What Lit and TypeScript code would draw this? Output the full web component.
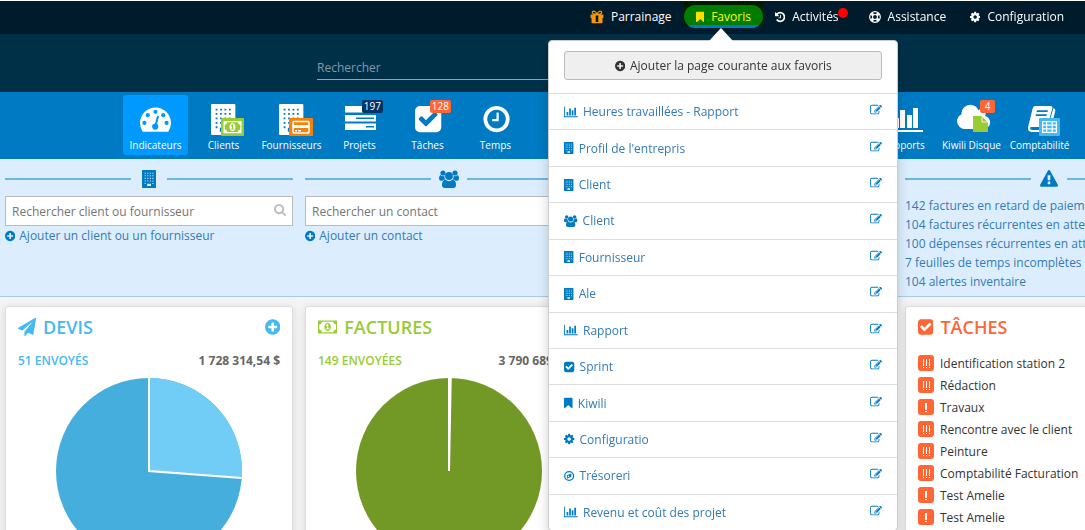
import { LitElement, html, css, svg, TemplateResult, SVGTemplateResult } from 'lit';
import { customElement, property } from 'lit/decorators.js';

interface Glyph {
  box: string;
  body: SVGTemplateResult;
}

const one = (box: string, d: string): Glyph => ({ box, body: svg`<path d=${d}></path>` });

const DISC =
  'm0 0q0 209-103 385.5t-279.5 279.5-385.5 103-385.5-103-279.5-279.5-103-385.5 103-385.5 279.5-279.5 385.5-103 385.5 103 279.5 279.5 103 385.5z';

const D = {
  check:
    'M813 1299l614-614q19-19 19-45t-19-45l-102-102q-19-19-45-19t-45 19l-467 467-211-211q-19-19-45-19t-45 19l-102 102q-19 19-19 45t19 45l358 358q19 19 45 19t45-19zm851-883v960q0 119-84.5 203.5t-203.5 84.5h-960q-119 0-203.5-84.5t-84.5-203.5v-960q0-119 84.5-203.5t203.5-84.5h960q119 0 203.5 84.5t84.5 203.5z',
  clock:
    'M1024 544v448q0 14-9 23t-23 9h-320q-14 0-23-9t-9-23v-64q0-14 9-23t23-9h224v-352q0-14 9-23t23-9h64q14 0 23 9t9 23zm416 352q0-148-73-273t-198-198-273-73-273 73-198 198-73 273 73 273 198 198 273 73 273-73 198-198 73-273zm224 0' +
    DISC.slice(4),
  money:
    'M768 1152h384v-96h-128v-448h-114l-148 137 77 80q42-37 55-57h2v288h-128v96zm512-256q0 70-21 142t-59.5 134-101.5 101-138 39-138-39-101.5-101-59.5-134-21-142 21-142 59.5-134 101.5-101 138-39 138 39 101.5 101 59.5 134 21 142zm512 256v-512q-106 0-181-75t-75-181h-1152q0 106-75 181t-181 75v512q106 0 181 75t75 181h1152q0-106 75-181t181-75zm128-832v1152q0 26-19 45t-45 19h-1792q-26 0-45-19t-19-45v-1152q0-26 19-45t45-19h1792q26 0 45 19t19 45z',
  cloud:
    'M1984 1152q0 159-112.5 271.5t-271.5 112.5h-1088q-185 0-316.5-131.5t-131.5-316.5q0-132 71-241.5t187-163.5q-2-28-2-43 0-212 150-362t362-150q158 0 286.5 88t187.5 230q70-62 166-62 106 0 181 75t75 181q0 75-41 138 129 30 213 134.5t84 239.5z',
  gauge:
    'M1792 1152q0 261-141 483-19 29-54 29h-1402q-35 0-54-29-141-221-141-483 0-182 71-348t191-286 286-191 348-71 348 71 286 191 191 286 71 348z',
};

/* Office block: outer wall with a grid of windows and a door cut out of it. */
const blockPath = (() => {
  let d = 'M64 0h1280q64 0 64 64v1664q0 64-64 64h-1280q-64 0-64-64v-1664q0-64 64-64z';
  for (let r = 0; r < 5; r++) {
    for (let c = 0; c < 4; c++) {
      if (r === 4 && (c === 1 || c === 2)) continue;
      d += `M${268 + c * 256} ${268 + r * 256}v104h104v-104z`;
    }
  }
  return d + 'M512 1376v224h384v-224z';
})();

const GLYPHS: Record<string, Glyph> = {
  building: one('0 0 1408 1792', blockPath),
  plus: one(
    '128 0 1536 1792',
    'M1344 960v-128q0-26-19-45t-45-19h-256v-256q0-26-19-45t-45-19h-128q-26 0-45 19t-19 45v256h-256q-26 0-45 19t-19 45v128q0 26 19 45t45 19h256v256q0 26 19 45t45 19h128q26 0 45-19t19-45v-256h256q26 0 45-19t19-45zm320-64' +
      DISC.slice(4)
  ),
  chart: one(
    '0 0 2048 1792',
    'M640 896v512h-256v-512h256zm384-512v1024h-256v-1024h256zm1024 1152v128h-2048v-1536h128v1408h1920zm-640-896v768h-256v-768h256zm384-384v1152h-256v-1152h256z'
  ),
  check: one('128 0 1536 1792', D.check),
  bookmark: one(
    '256 0 1280 1792',
    'M1420 128q23 0 44 9 33 13 52.5 41t19.5 62v1289q0 34-19.5 62t-52.5 41q-19 8-44 8-48 0-83-32l-441-424-441 424q-36 33-83 33-23 0-44-9-33-13-52.5-41t-19.5-62v-1289q0-34 19.5-62t52.5-41q21-9 44-9h1048z'
  ),
  cog: one(
    '128 0 1536 1792',
    'M1152 896q0-106-75-181t-181-75-181 75-75 181 75 181 181 75 181-75 75-181zm512-109v222q0 12-8 23t-20 13l-185 28q-19 54-39 91 35 50 107 138 10 12 10 25t-9 23q-27 37-99 108t-94 71q-12 0-26-9l-138-108q-44 23-91 38-16 136-29 186-7 28-36 28h-222q-14 0-24.5-8.5t-11.5-21.5l-28-184q-49-16-90-37l-141 107q-10 9-25 9-14 0-25-11-126-114-165-168-7-10-7-23 0-12 8-23 15-21 51-66.5t54-70.5q-27-50-41-99l-183-27q-13-2-21-12.5t-8-23.5v-222q0-12 8-23t19-13l186-28q14-46 39-92-40-57-107-138-10-12-10-24 0-10 9-23 26-36 98.5-107.5t94.5-71.5q13 0 26 10l138 107q44-23 91-38 16-136 29-186 7-28 36-28h222q14 0 24.5 8.5t11.5 21.5l28 184q49 16 90 37l142-107q9-9 24-9 13 0 25 10 129 119 165 170 7 8 7 22 0 12-8 23-15 21-51 66.5t-54 70.5q26 50 41 98l183 28q13 2 21 12.5t8 23.5z'
  ),
  search: one(
    '64 128 1664 1664',
    'M1216 832q0-185-131.5-316.5t-316.5-131.5-316.5 131.5-131.5 316.5 131.5 316.5 316.5 131.5 316.5-131.5 131.5-316.5zm512 832q0 52-38 90t-90 38q-54 0-90-38l-343-342q-179 124-399 124-143 0-273.5-55.5t-225-150-150-225-55.5-273.5 55.5-273.5 150-225 225-150 273.5-55.5 273.5 55.5 225 150 150 225 55.5 273.5q0 220-124 399l343 343q37 37 37 90z'
  ),
  edit: one(
    '0 0 1792 1792',
    'M888 1184l116-116-152-152-116 116v56h96v96h56zm440-720q-16-16-33 1l-350 350q-17 17-1 33t33-1l350-350q17-17 1-33zm80 594v190q0 119-84.5 203.5t-203.5 84.5h-832q-119 0-203.5-84.5t-84.5-203.5v-832q0-119 84.5-203.5t203.5-84.5h832q63 0 117 25 15 7 18 23 3 17-9 29l-49 49q-14 14-32 8-23-6-45-6h-832q-66 0-113 47t-47 113v832q0 66 47 113t113 47h832q66 0 113-47t47-113v-126q0-13 9-22l64-64q15-15 35-7t20 29zm-96-738l288 288-672 672h-288v-288zm444 132l-92 92-288-288 92-92q28-28 68-28t68 28l152 152q28 28 28 68t-28 68z'
  ),
  warning: one(
    '0 0 1792 1792',
    'M1024 1375v-190q0-14-9.5-23.5t-22.5-9.5h-192q-13 0-22.5 9.5t-9.5 23.5v190q0 14 9.5 23.5t22.5 9.5h192q13 0 22.5-9.5t9.5-23.5zm-2-374l18-459q0-12-10-19-13-11-24-11h-220q-11 0-24 11-10 7-10 21l17 457q0 10 10 16.5t24 6.5h185q14 0 23.5-6.5t10.5-16.5zm-14-934l768 1408q35 63-2 126-17 29-46.5 46t-63.5 17h-1536q-34 0-63.5-17t-46.5-46q-37-63-2-126l768-1408q17-31 47-49t65-18 65 18 47 49z'
  ),
  plane: one(
    '0 0 1792 1792',
    'M1764 11q33 24 27 64l-256 1536q-5 29-32 45-14 8-31 8-11 0-24-5l-453-185-242 295q-18 23-49 23-13 0-22-4-19-7-30.5-23.5t-11.5-36.5v-349l864-1059-1069 925-395-162q-37-14-40-55-2-40 32-59l1664-960q15-9 32-9 20 0 36 11z'
  ),
  money: one('0 0 1920 1792', D.money),
  history: one(
    '128 0 1536 1792',
    'M1664 896q0 156-61 298t-164 245-245 164-298 61q-172 0-327-72.5t-264-204.5q-7-10-6.5-22.5t8.5-20.5l137-138q10-9 25-9 16 2 23 12 73 95 179 147t225 52q104 0 198.5-40.5t163.5-109.5 109.5-163.5 40.5-198.5-40.5-198.5-109.5-163.5-163.5-109.5-198.5-40.5q-98 0-188 35.5t-160 101.5l137 138q31 30 14 69-17 40-59 40h-448q-26 0-45-19t-19-45v-448q0-42 40-59 39-17 69 14l130 129q107-101 244.5-156.5t284.5-55.5q156 0 298 61t245 164 164 245 61 298zm-640-288v448q0 14-9 23t-23 9h-320q-14 0-23-9t-9-23v-64q0-14 9-23t23-9h224v-352q0-14 9-23t23-9h64q14 0 23 9t9 23z'
  ),
  gift: {
    box: '0 0 14 14',
    body: svg`<path fill-rule="evenodd" d="M.6 4.6h3.3C2.4 4.4 1.7 3.600 1.700 2.600C1.700 1.400 2.600.6 3.700.6C5 .6 6 1.500 7 3C8 1.500 9 .6 10.300.6C11.400.6 12.300 1.400 12.300 2.600C12.300 3.600 11.600 4.400 10.100 4.600H13.400V8H12.500V12.500Q12.500 13.300 11.700 13.300H2.300Q1.500 13.300 1.500 12.500V8H.6ZM3.700 1.800C3.200 1.800 2.900 2.100 2.900 2.600C2.900 3.200 3.400 3.500 4 3.500H6C5.400 2.600 4.600 1.800 3.700 1.800ZM10.300 1.800C9.400 1.800 8.600 2.600 8 3.500H10C10.600 3.500 11.100 3.200 11.100 2.600C11.100 2.100 10.800 1.800 10.300 1.800ZM5.700 5.500V12H8.300V5.500Z"></path>`,
  },
  ring: {
    box: '0 0 14 14',
    body: svg`<circle cx="7" cy="7" r="6.200" fill="none" stroke="currentColor" stroke-width="1.400"></circle>
      <circle cx="7" cy="7" r="2.900" fill="none" stroke="currentColor" stroke-width="1.200"></circle>
      <g fill="none" stroke="currentColor" stroke-width="3.400"><path d="M2.700 2.700l2.200 2.200M11.300 2.700l-2.200 2.200M2.700 11.300l2.200-2.200M11.300 11.300l-2.200-2.200"></path></g>`,
  },
  users: {
    box: '0 0 20 18',
    body: svg`<circle cx="4" cy="3" r="2.600"></circle><circle cx="16" cy="3" r="2.600"></circle><circle cx="10" cy="6" r="3.900"></circle>
      <path d="M1.200 5Q3.800 7 5.300 5.800Q5.200 8 6.400 9.600Q4.500 9.600 3.500 10.800H2Q0 10.700 0 8.500Q0 6 1.200 5ZM18.800 5Q16.200 7 14.700 5.800Q14.800 8 13.600 9.600Q15.500 9.600 16.500 10.800H18Q20 10.700 20 8.500Q20 6 18.800 5ZM6.400 9.800Q10 12.600 13.600 9.800Q17 10.200 17 15Q17 18 14.200 18H5.800Q3 18 3 15Q3 10.200 6.400 9.800Z"></path>`,
  },
  compass: {
    box: '0 0 12 14',
    body: svg`<circle cx="6" cy="7" r="5.200" fill="none" stroke="currentColor" stroke-width="1.500"></circle>
      <path fill-rule="evenodd" d="M8.600 4V8L3.400 10.200V6.200ZM4.400 8.800L6 8V6.400L4.400 7.100Z"></path>`,
  },
  /* Navigation pictograms share a 45 by 38 box. */
  navGauge: {
    box: '0 0 45 38',
    body: svg`<g transform="translate(7 3) scale(.0173)"><path d=${D.gauge}></path>
      <g fill="#09f"><circle cx="256" cy="1152" r="120"></circle><circle cx="448" cy="704" r="120"></circle><circle cx="896" cy="512" r="120"></circle><circle cx="1344" cy="704" r="120"></circle><circle cx="1536" cy="1152" r="120"></circle>
      <circle cx="880" cy="1360" r="180"></circle><path d="M1100 780L935 1400L820 1360L985 750Q1060 700 1100 780Z"></path></g></g>`,
  },
  navClients: {
    box: '0 0 45 38',
    body: svg`<path transform="translate(10 4) scale(.0173)" d=${blockPath}></path>
      <rect x="20" y="18" width="23" height="18" rx="1" fill="#9c3"></rect>
      <path transform="translate(22.500 18.700) scale(.0094)" d=${D.money}></path>`,
  },
  navSuppliers: {
    box: '0 0 45 38',
    body: svg`<path transform="translate(10 4) scale(.0173)" d=${blockPath}></path>
      <rect x="20" y="18" width="24" height="18" rx="1" fill="#f7820b"></rect>
      <rect x="24" y="21.500" width="16" height="11.500" rx="1" fill="none" stroke="#fff" stroke-width="1.500"></rect>
      <path d="M24 25h16v3H24zM26 30h2v1.500h-2zM29 30h3v1.500h-3z"></path>`,
  },
  navProjects: {
    box: '0 0 45 38',
    body: svg`<path fill-rule="evenodd" d="M8 6h31v6.500H8zM8 15h31v6.500H8zM8 23.500h31V30H8zM19 17.500v1.500h18v-1.500zM29 26v1.500h8V26z"></path>`,
  },
  navTasks: {
    box: '0 0 45 38',
    body: svg`<path transform="translate(7.800 3.800) scale(.0171)" d=${D.check}></path>`,
  },
  navTime: {
    box: '0 0 45 38',
    body: svg`<path transform="translate(8.200 3.800) scale(.0171)" d=${D.clock}></path>`,
  },
  navReports: {
    box: '0 0 45 38',
    body: svg`<path d="M3 8h2v22h37v2H3zM13 18h5v10h-5zM19 10h5v18h-5zM26 15h5v13h-5zM32 8h5v20h-5z"></path>`,
  },
  navDisk: {
    box: '0 0 45 38',
    body: svg`<path transform="translate(7 2.500) scale(.0172)" d=${D.cloud}></path>
      <path fill="#9c3" d="M24 16h9v6h6v10H24z"></path><path d="M33 16l6 6h-6z" fill="#9c3" stroke="#fff" stroke-width=".800"></path>`,
  },
  navLedger: {
    box: '0 0 45 38',
    body: svg`<path fill-rule="evenodd" d="M18 6H33.500Q36 6 35.300 8.600L31 24Q30 27 27 27H14.500Q13 27 13 28.300Q13.300 30 15.500 30H30V32H14.500Q10.500 31.500 11 27.500L15.500 9Q16.300 6 18 6ZM20 10.300L19.500 12H30.500L31 10.300ZM19 14.300L18.500 16H29.500L30 14.300Z"></path>
      <path d="M36.500 8Q39 9 38 12L36.500 18H33.500Z"></path>
      <rect x="22" y="18" width="21" height="18" rx="1" fill="#45b9f2"></rect>
      <path fill-rule="evenodd" d="M25 21H40V33H25ZM26.200 22.200V24.600H29V22.200ZM30.200 22.200V24.600H34.600V22.200ZM35.800 22.200V24.600H38.800V22.200ZM26.200 25.800V28.200H29V25.800ZM30.200 25.800V28.200H34.600V25.800ZM35.800 25.800V28.200H38.800V25.800ZM26.200 29.400V31.800H29V29.400ZM30.200 29.400V31.800H34.600V29.400ZM35.800 29.400V31.800H38.800V29.400Z"></path>`,
  },
};

const icon = (name: string, cls = 'i12'): TemplateResult =>
  html`<svg class="icon ${cls}" viewBox=${GLYPHS[name].box} aria-hidden="true">${GLYPHS[name].body}</svg>`;

const iconStyles = css`
  .icon { display: block; flex: none; width: auto; fill: currentColor; }
  .i12 { height: 12px; }
  .i14 { height: 14px; }
  .i18 { height: 18px; }
  .i38 { height: 38px; }
`;

const reset = css`
  * { box-sizing: border-box; }
  a { color: inherit; text-decoration: none; }
  ul { list-style: none; margin: 0; padding: 0; }
  button, input { font: inherit; color: inherit; margin: 0; }
`;

const FAVORITES: [string, string][] = [
  ['chart', 'Heures travaillées - Rapport'],
  ['building', "Profil de l'entrepris"],
  ['building', 'Client'],
  ['users', 'Client'],
  ['building', 'Fournisseur'],
  ['building', 'Ale'],
  ['chart', 'Rapport'],
  ['check', 'Sprint'],
  ['bookmark', 'Kiwili'],
  ['cog', 'Configuratio'],
  ['compass', 'Trésoreri'],
  ['chart', 'Revenu et coût des projet'],
];

@customElement('favorites-menu')
export class FavoritesMenu extends LitElement {
  static styles = [
    reset,
    iconStyles,
    css`
      :host {
        display: block;
        background: #fff;
        border: 1px solid #ccc;
        border-radius: 4px;
        box-shadow: 0 6px 12px rgba(0, 0, 0, 0.18);
        color: #337ab7;
      }
      .head { padding: 10px 15px 13px; }
      .add {
        display: flex; align-items: center; justify-content: center; gap: 5px;
        width: 100%; height: 29px; padding: 0;
        background: #efefef; border: 1px solid #bbb; border-radius: 3px; color: #333;
      }
      .list { display: grid; grid-auto-rows: 1fr; min-height: calc(100vh - 93px); }
      .row {
        display: flex; align-items: center; justify-content: space-between;
        padding: 0 15px; border-top: 1px solid #ddd;
      }
      .link { display: flex; align-items: center; gap: 5px; }
      .link .icon, .edit { color: #007ac3; }
      .edit { display: block; padding: 0 0 3px; border: 0; background: none; }
    `,
  ];

  render() {
    return html`
      <div class="head"><button class="add">${icon('plus')}Ajouter la page courante aux favoris</button></div>
      <ul class="list">
        ${FAVORITES.map(
          ([glyph, text]) => html`<li class="row">
            <a class="link" href="#">${icon(glyph)}${text}</a>
            <button class="edit" aria-label="Modifier">${icon('edit')}</button>
          </li>`
        )}
      </ul>`;
  }
}

@customElement('top-bar')
export class TopBar extends LitElement {
  static styles = [
    reset,
    iconStyles,
    css`
      :host { display: block; background: #001b2b; border-top: 1px solid #fff; color: #fff; }
      .items { display: flex; justify-content: flex-end; height: 33px; padding: 0 9px 0 0; }
      .item { position: relative; }
      .link { display: flex; align-items: center; gap: 7px; height: 31px; padding: 0 12px; }
      .gift { color: #f7960b; }
      .current { height: 24px; margin-top: 1px; background: #001a00; }
      .current .link {
        height: 23px; margin-top: 3px; border-radius: 12px;
        background: linear-gradient(#007d00 20px, #007ac3 20px); color: #ff0;
      }
      .current .icon { color: #fd0; }
      .alerted { padding-right: 6px; }
      .dot { position: absolute; top: 7px; right: 9px; width: 10px; height: 10px; border-radius: 50%; background: #f00; }
      .arrow {
        position: absolute; top: 26px; left: calc(50% - 14px); z-index: 1;
        border: solid transparent; border-width: 0 12px 13px; border-bottom-color: #fff;
      }
      .menu { position: absolute; top: 38px; left: calc(50% - 175px); width: 350px; }
    `,
  ];

  render() {
    return html`<ul class="items">
      <li class="item"><a class="link" href="#"><span class="gift">${icon('gift', 'i14')}</span>Parrainage</a></li>
      <li class="item current">
        <a class="link" href="#">${icon('bookmark')}Favoris</a>
        <span class="arrow"></span>
        <favorites-menu class="menu"></favorites-menu>
      </li>
      <li class="item alerted"><a class="link" href="#">${icon('history')}Activités</a><span class="dot"></span></li>
      <li class="item"><a class="link" href="#">${icon('ring')}Assistance</a></li>
      <li class="item"><a class="link" href="#">${icon('cog')}Configuration</a></li>
    </ul>`;
  }
}

interface NavEntry {
  glyph: string;
  text: string;
  badge?: string;
  tone?: string;
}

const NAV_LEFT: NavEntry[] = [
  { glyph: 'navGauge', text: 'Indicateurs', tone: 'active' },
  { glyph: 'navClients', text: 'Clients' },
  { glyph: 'navSuppliers', text: 'Fournisseurs' },
  { glyph: 'navProjects', text: 'Projets', badge: '197', tone: 'navy' },
  { glyph: 'navTasks', text: 'Tâches', badge: '128' },
  { glyph: 'navTime', text: 'Temps' },
];
const NAV_RIGHT: NavEntry[] = [
  { glyph: 'navReports', text: 'Rapports' },
  { glyph: 'navDisk', text: 'Kiwili Disque', badge: '4' },
  { glyph: 'navLedger', text: 'Comptabilité' },
];

@customElement('main-nav')
export class MainNav extends LitElement {
  static styles = [
    reset,
    iconStyles,
    css`
      :host {
        display: flex; justify-content: space-between;
        padding: 3px 126px 4px 123px; background: #007ac3; color: #fff;
      }
      .group { display: flex; gap: 3px; }
      .tile {
        position: relative; display: flex; flex-direction: column; align-items: center;
        width: 65px; height: 60px; padding-top: 5px; border-radius: 3px;
        font-size: 10px; line-height: 14px; font-weight: 500; white-space: nowrap;
      }
      .active { background: #09f; }
      .badge {
        position: absolute; top: 5px; right: 9px; min-width: 15px; padding: 0 2px;
        border-radius: 2px; background: #f63; line-height: 13px; text-align: center;
      }
      .navy .badge { background: #036; }
    `,
  ];

  private group(entries: NavEntry[]) {
    return html`<div class="group">
      ${entries.map(
        (e) => html`<a class="tile ${e.tone ?? ''}" href="#">
          ${icon(e.glyph, 'i38')}<span>${e.text}</span>
          ${e.badge ? html`<span class="badge">${e.badge}</span>` : null}
        </a>`
      )}
    </div>`;
  }

  render() {
    return html`${this.group(NAV_LEFT)}${this.group(NAV_RIGHT)}`;
  }
}

@customElement('pie-chart')
export class PieChart extends LitElement {
  /* Share of the circle taken by the first slice, from 0 to 1. */
  @property({ type: Number }) share = 0;

  static styles = css`
    :host { display: block; }
    svg { display: block; width: 190px; height: 190px; margin: 0 auto; }
    .rest { fill: var(--pie-main); }
    .first { fill: var(--pie-light); }
    .cut { stroke: #fff; stroke-width: 2; fill: none; }
  `;

  render() {
    const a = this.share * Math.PI * 2;
    const x = 95 + 93 * Math.sin(a);
    const y = 95 - 93 * Math.cos(a);
    return html`<svg viewBox="0 0 190 190" role="img" aria-label="Répartition">
      <circle class="rest" cx="95" cy="95" r="93"></circle>
      <path class="first" d="M95 95V2A93 93 0 0 1 ${x} ${y}Z"></path>
      <path class="cut" d="M${x} ${y}L95 95V0"></path>
    </svg>`;
  }
}

const ALERTS = [
  '142 factures en retard de paiement',
  '104 factures récurrentes en attente',
  '100 dépenses récurrentes en attente',
  '7 feuilles de temps incomplètes',
  '104 alertes inventaire',
];

const TASKS: [number, string][] = [
  [3, 'Identification station 2'],
  [3, 'Rédaction'],
  [1, 'Travaux'],
  [3, 'Rencontre avec le client'],
  [3, 'Peinture'],
  [3, 'Comptabilité Facturation'],
  [1, 'Test Amelie'],
  [1, 'Test Amelie'],
];

@customElement('app-root')
export class AppRoot extends LitElement {
  static styles = [
    reset,
    iconStyles,
    css`
      :host {
        display: block; height: 100vh; overflow: auto; scrollbar-width: none;
        background: #f4f4f5; color: #333;
        font-family: 'Open Sans', 'Noto Sans', sans-serif; font-size: 12px; line-height: 17px;
      }
      .top { position: sticky; top: 0; left: 0; z-index: 2; }
      .page { min-width: 1198px; }
      .brand { display: flex; justify-content: center; align-items: flex-end; height: 58px; padding-bottom: 12px; background: #003048; }
      .global {
        width: 564px; height: 25px; padding: 0; border: 0; border-bottom: 1px solid #8fa6b2;
        background: none; color: #fff; outline: none;
      }
      .global::placeholder { color: #8299a6; opacity: 1; }
      .cols { display: grid; grid-template-columns: repeat(4, minmax(288px, 1fr)); gap: 12px; padding: 0 5px; }
      .last { grid-column: 4; }
      .quick { height: 138px; padding-top: 7px; background: #dceefe; border-bottom: 1px solid #a9cbe2; color: #337ab7; }
      .rule { display: flex; align-items: center; height: 26px; margin-bottom: 4px; color: #007ac3; }
      .rule::before, .rule::after { content: ''; flex: 1; height: 2px; background: #6cb6e2; }
      .mark { display: flex; justify-content: center; width: 36px; }
      .field { position: relative; display: block; }
      .field .icon { position: absolute; top: 8px; right: 7px; color: #bbb; }
      .box {
        display: block; width: 100%; height: 30px; padding: 0 28px 0 6px;
        border: 1px solid #bbb; border-radius: 0; background: #fff; color: #333;
      }
      .box::placeholder { color: #757575; opacity: 1; }
      .add { display: flex; align-items: center; gap: 4px; margin-top: 1px; }
      .add .icon { color: #007ac3; }
      .alerts { line-height: 19px; white-space: nowrap; }
      .cards { padding-top: 9px; padding-bottom: 12px; }
      .card {
        padding: 7px 12px 12px; background: #fff; border: 1px solid #ddd; border-radius: 3px;
        box-shadow: 0 2px 8px rgba(0, 0, 0, 0.12);
      }
      .title { display: flex; align-items: center; gap: 7px; margin: 0; color: var(--tone); font-size: 18px; line-height: 26px; font-weight: 600; }
      .more { margin-left: auto; padding: 0; border: 0; background: none; color: inherit; }
      .sum { display: flex; justify-content: space-between; margin: 12px 0 7px; color: #666; font-weight: 700; }
      .sum a { color: var(--tone); font-weight: 600; }
      .devis { --tone: #45b9f2; --pie-main: #46aedd; --pie-light: #72cdf6; }
      .factures { --tone: #9c3; --pie-main: #729926; --pie-light: #fff; }
      .taches { --tone: #f63; }
      .tasks { margin-top: 12px; }
      .task { display: flex; align-items: center; gap: 6px; height: 22px; white-space: nowrap; }
      .level { display: flex; justify-content: center; align-items: center; gap: 2px; width: 16px; height: 16px; border-radius: 3px; background: #f63; }
      .tick { width: 1px; height: 9px; background: linear-gradient(#fff 7px, transparent 7px, transparent 8px, #fff 8px); }
      .tick.solo { width: 2px; }
    `,
  ];

  private finder(glyph: string, hint: string, add: string) {
    return html`<section>
      <div class="rule"><span class="mark">${icon(glyph, 'i18')}</span></div>
      <label class="field"><input class="box" type="text" placeholder=${hint} aria-label=${hint} />${icon('search')}</label>
      <a class="add" href="#">${icon('plus')}${add}</a>
    </section>`;
  }

  private summary(kind: string, glyph: string, title: string, count: string, total: string, share: number) {
    return html`<section class="card ${kind}">
      <h2 class="title">${icon(glyph, 'i18')}${title}<button class="more" aria-label="Ajouter">${icon('plus', 'i18')}</button></h2>
      <div class="sum"><a href="#">${count}</a><span>${total}</span></div>
      <pie-chart .share=${share}></pie-chart>
    </section>`;
  }

  render() {
    return html`
      <top-bar class="top"></top-bar>
      <div class="page">
        <header class="brand"><input class="global" type="text" placeholder="Rechercher" aria-label="Rechercher" /></header>
        <main-nav></main-nav>
        <div class="cols quick">
          ${this.finder('building', 'Rechercher client ou fournisseur', 'Ajouter un client ou un fournisseur')}
          ${this.finder('users', 'Rechercher un contact', 'Ajouter un contact')}
          <section class="last">
            <div class="rule"><span class="mark">${icon('warning', 'i18')}</span></div>
            <ul class="alerts">${ALERTS.map((t) => html`<li><a href="#">${t}</a></li>`)}</ul>
          </section>
        </div>
        <div class="cols cards">
          ${this.summary('devis', 'plane', 'DEVIS', '51 ENVOYÉS', '1 728 314,54 $', 0.262)}
          ${this.summary('factures', 'money', 'FACTURES', '149 ENVOYÉES', '3 790 689,00 $', 0.003)}
          <section class="card taches last">
            <h2 class="title">${icon('check', 'i18')}TÂCHES</h2>
            <ul class="tasks">
              ${TASKS.map(
                ([n, t]) => html`<li class="task">
                  <span class="level">${Array.from({ length: n }, () => html`<i class="tick ${n === 1 ? 'solo' : ''}"></i>`)}</span>${t}
                </li>`
              )}
            </ul>
          </section>
        </div>
      </div>`;
  }
}
